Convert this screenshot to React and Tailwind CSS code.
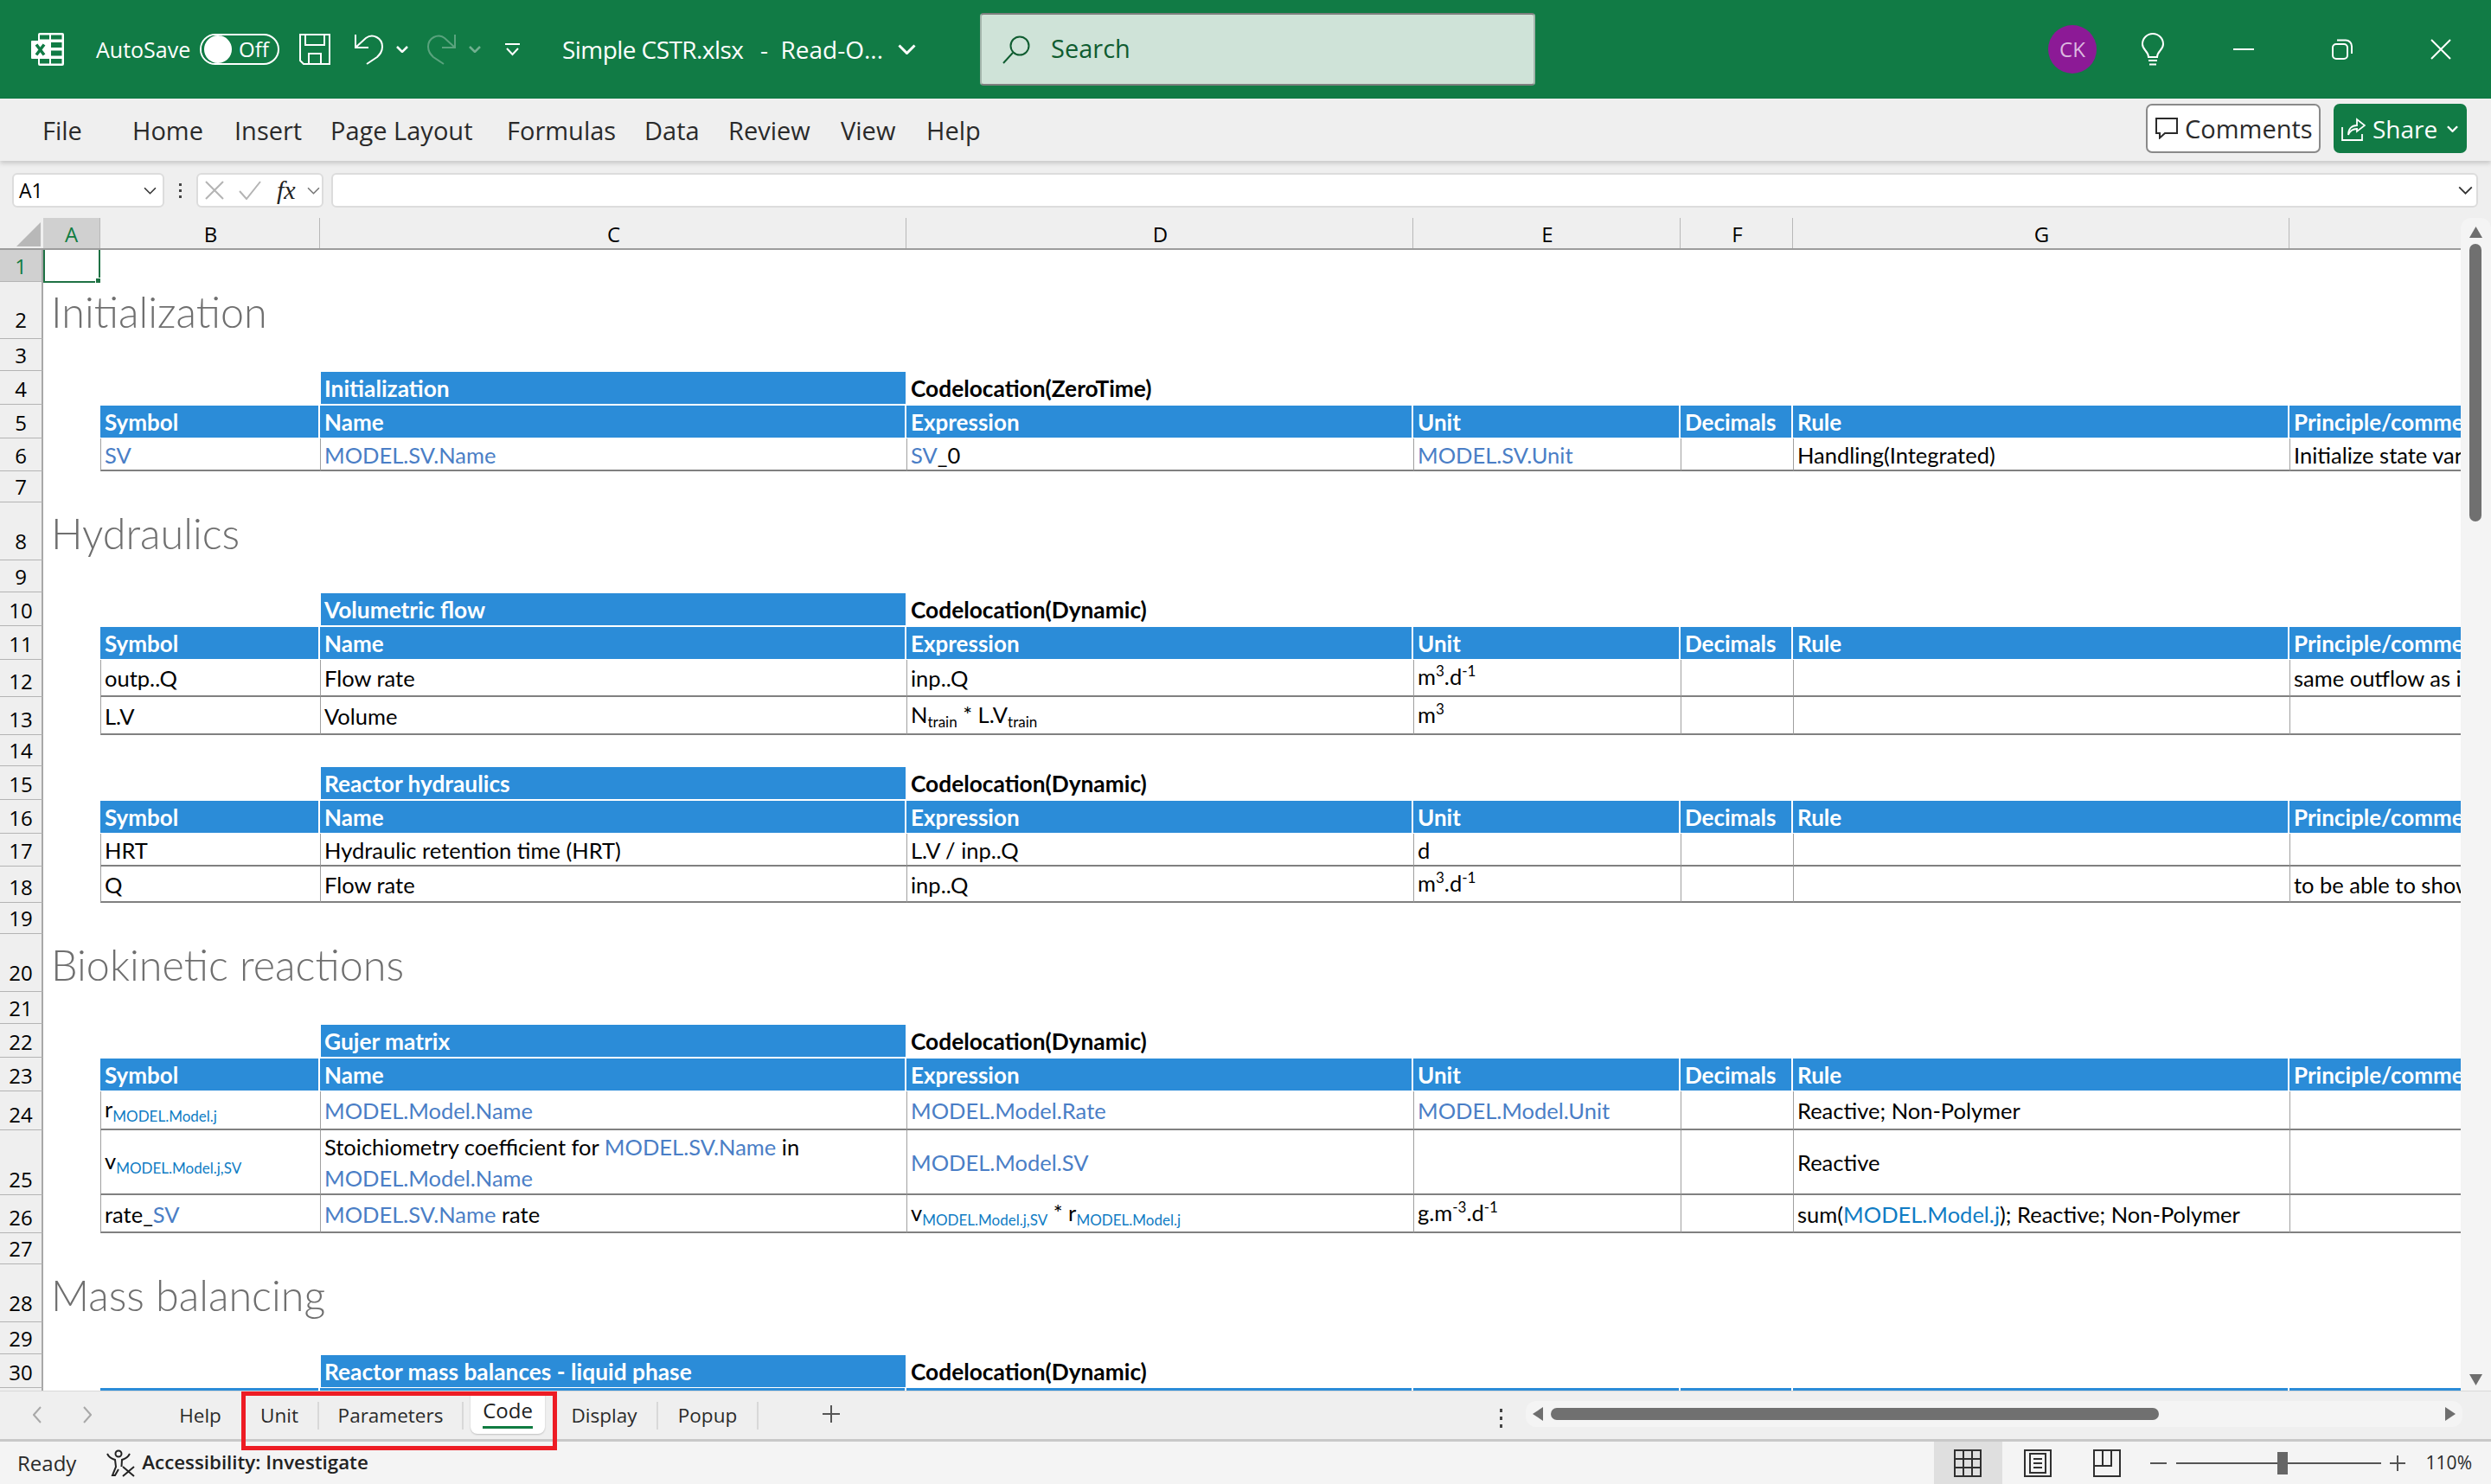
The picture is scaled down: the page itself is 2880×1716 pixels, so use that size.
import React from "react";

const Chevron = ({ className, color = "currentColor", sw = 2 }) => (
  <svg viewBox="0 0 14 8" className={className} fill="none" stroke={color} strokeWidth={sw}>
    <path d="M1 1 L7 7 L13 1" />
  </svg>
);

const ExcelLogo = () => (
  <svg viewBox="0 0 38 38" className="w-[38px] h-[38px] shrink-0">
    <rect x="8" y="0" width="30" height="38" rx="2" fill="#fff" />
    <g fill="#117b45">
      <rect x="10" y="2.5" width="11" height="5" />
      <rect x="23" y="2.5" width="12.500" height="5" />
      <rect x="23" y="11" width="12.500" height="6" />
      <rect x="23" y="20.500" width="12.500" height="6" />
      <rect x="23" y="30" width="12.500" height="5.500" />
      <rect x="10" y="30" width="11" height="5.500" />
    </g>
    <rect x="0" y="9" width="21" height="21" rx="1" fill="#fff" />
    <path d="M6 13.500 L15 25.500 M15 13.500 L6 25.500" stroke="#117b45" strokeWidth="3.500" />
  </svg>
);

const SaveIcon = () => (
  <svg viewBox="0 0 36 36" className="w-[36px] h-[36px] shrink-0" fill="none" stroke="#fff" strokeWidth="2">
    <path d="M1 1 H35 V35 H5 L1 31 Z" />
    <path d="M7 1 V13 H29 V1" />
    <path d="M11 35 V23 H25 V35" />
  </svg>
);

const UndoIcon = ({ className }) => (
  <svg viewBox="0 0 33 36" className={className} fill="none" stroke="#fff" strokeWidth="2">
    <path d="M1 1 V16 H16" />
    <path d="M1 16 L13 5 C21 -1 32 5 32 15 C32 21 29 24 26 27 L14 35" />
  </svg>
);

const SearchIcon = () => (
  <svg viewBox="0 0 32 33" className="w-[32px] h-[33px] shrink-0" fill="none" stroke="#0f5c30" strokeWidth="2">
    <circle cx="20" cy="12" r="10.500" />
    <path d="M12 20 L1 32" />
  </svg>
);

const Bulb = () => (
  <svg viewBox="0 0 26 38" className="w-[26px] h-[38px] shrink-0" fill="none" stroke="#fff" strokeWidth="2">
    <path d="M8 28 C8 21 1 20 1 13 A12 12 0 0 1 25 13 C25 20 18 21 18 28 Z" />
    <path d="M8 32 H18 M9 36.500 H17" />
  </svg>
);

const Restore = () => (
  <svg viewBox="0 0 24 24" className="w-[24px] h-[24px] shrink-0" fill="none" stroke="#fff" strokeWidth="2">
    <rect x="1" y="6" width="17" height="17" rx="4" />
    <path d="M6 1.500 H16 A7 7 0 0 1 23 8.500 V17" />
  </svg>
);

const CloseX = () => (
  <svg viewBox="0 0 24 24" className="w-[24px] h-[24px] shrink-0" fill="none" stroke="#fff" strokeWidth="2">
    <path d="M1 1 L23 23 M23 1 L1 23" />
  </svg>
);

const CommentIcon = () => (
  <svg viewBox="0 0 26 25" className="w-[26px] h-[25px] shrink-0" fill="none" stroke="#2b2b2b" strokeWidth="2">
    <path d="M1 1 H25 V18 H11 L5 23.500 V18 H1 Z" />
  </svg>
);

const ShareIcon = () => (
  <svg viewBox="0 0 28 28" className="w-[28px] h-[28px] shrink-0" fill="none" stroke="#fff" strokeWidth="1.800">
    <path d="M1 12 V27 H24 V20" />
    <path d="M8 21 C8 14 12 10 18 10 V3 L27 10 L18 17 V14 C14 14 10 16 8 21 Z" />
  </svg>
);

const AccessIcon = () => (
  <svg viewBox="0 0 35 32" className="w-[35px] h-[32px] shrink-0" fill="none" stroke="#222" strokeWidth="2">
    <circle cx="15" cy="5" r="3.500" />
    <path d="M2 5 C5 11 9 11 11 12 L12 20 L8 30 H11 L15 23 M28 5 C25 11 21 11 19 12 L18.500 20" />
    <path d="M20 20 L33 31 M33 20 L20 31" />
  </svg>
);

const GridView = () => (
  <svg viewBox="0 0 32 32" className="w-[32px] h-[32px]" fill="none" stroke="#303030" strokeWidth="2">
    <rect x="1" y="1" width="30" height="30" />
    <path d="M11 1 V31 M21 1 V31 M1 11 H31 M1 21 H31" />
  </svg>
);

const PageView = () => (
  <svg viewBox="0 0 32 32" className="w-[32px] h-[32px]" fill="none" stroke="#303030" strokeWidth="2">
    <rect x="1" y="1" width="30" height="30" />
    <rect x="7" y="5" width="18" height="22" />
    <path d="M11 11 H21 M11 16 H21 M11 21 H21" />
  </svg>
);

const BreakView = () => (
  <svg viewBox="0 0 32 32" className="w-[32px] h-[32px]" fill="none" stroke="#303030" strokeWidth="2">
    <rect x="1" y="1" width="30" height="30" />
    <path d="M1 19 H21 V1 M11 1 V19" />
  </svg>
);

const Triangle = ({ className, d, vb = "0 0 14 14", fill = "#6e6e6e" }) => (
  <svg viewBox={vb} className={className} fill={fill}>
    <path d={d} />
  </svg>
);

const L = ({ children }) => <span className="text-[#4a7ec6]">{children}</span>;
const Sub = ({ children }) => (
  <span className="relative top-[5px] text-[17px] text-[#0f7cc4]">{children}</span>
);
const SubK = ({ children }) => <span className="relative top-[5px] text-[17px]">{children}</span>;
const Sup = ({ children }) => <span className="relative -top-[10px] text-[17px]">{children}</span>;

const W = {
  a: "w-[66px]",
  b: "w-[254px]",
  c: "w-[678px]",
  d: "w-[586px]",
  e: "w-[309px]",
  f: "w-[130px]",
  g: "w-[574px]",
  h: "w-[198px]",
};
const COLS = ["b", "c", "d", "e", "f", "g", "h"];

const RowHead = ({ n, sel, tall }) => (
  <div
    className={`w-[50px] shrink-0 h-full flex items-end justify-center border-r-2 border-b border-r-[#a8a8a8] border-b-[#b4b4b4] text-[24px] leading-[35px] font-['Open_Sans',sans-serif] ${
      sel ? "bg-[#d0d0d0] text-[#107c41]" : "bg-[#efefef] text-black"
    } ${tall ? "pb-[4px]" : ""}`}
  >
    {n}
  </div>
);

const Row = ({ h, n, sel, tall, children }) => (
  <div className={`flex shrink-0 ${h}`}>
    <RowHead n={n} sel={sel} tall={tall} />
    {children}
  </div>
);

const Section = ({ h, n, children }) => (
  <Row h={h} n={n} tall>
    <div className="flex-1 pl-[9px] flex items-end pb-[4px]">
      <span className="text-[#6f6f6f] text-[48.5px] leading-[56px] font-light whitespace-nowrap">{children}</span>
    </div>
  </Row>
);

const Blank = ({ h, n }) => <Row h={h} n={n} />;

const TitleRow = ({ n, title, loc }) => (
  <Row h="h-[39px]" n={n}>
    <div className={`${W.a} shrink-0`} />
    <div className={`${W.b} shrink-0`} />
    <div className={`${W.c} shrink-0 h-full bg-[#2b8cd8] border border-white flex items-center pl-[4px] pt-[2px] text-white font-bold text-[26.300px] whitespace-nowrap`}>
      {title}
    </div>
    <div className="pl-[5px] pt-[2px] flex items-center font-bold text-black text-[26.300px] whitespace-nowrap">{loc}</div>
  </Row>
);

const HEADS = ["Symbol", "Name", "Expression", "Unit", "Decimals", "Rule", "Principle/comment"];

const HeadRow = ({ n }) => (
  <Row h="h-[39px]" n={n}>
    <div className={`${W.a} shrink-0`} />
    {COLS.map((c, i) => (
      <div
        key={c}
        className={`${W[c]} shrink-0 h-full bg-[#2b8cd8] border-y border-white ${i < 6 ? "border-r-2" : ""} flex items-center pl-[5px] pt-[2px] text-white font-bold text-[26px] whitespace-nowrap overflow-hidden`}
      >
        {HEADS[i]}
      </div>
    ))}
  </Row>
);

const DataRow = ({ h, n, cells }) => (
  <Row h={h} n={n}>
    <div className={`${W.a} shrink-0`} />
    {COLS.map((c, i) => (
      <div
        key={c}
        className={`${W[c]} shrink-0 h-full border-l border-l-[#a0a0a0] border-b-2 border-b-[#808080] flex items-center pl-[4px] pt-[1px] text-black text-[25.500px] leading-[36px] whitespace-nowrap overflow-hidden`}
      >
        {cells[i]}
      </div>
    ))}
  </Row>
);

const M3D = () => (
  <span>m<Sup>3</Sup>.d<Sup>-1</Sup></span>
);

const RIBBON = [
  ["File", "w-[104px]"],
  ["Home", "w-[118px]"],
  ["Insert", "w-[111px]"],
  ["Page Layout", "w-[204px]"],
  ["Formulas", "w-[159px]"],
  ["Data", "w-[97px]"],
  ["Review", "w-[130px]"],
  ["View", "w-[99px]"],
  ["Help", "w-[70px]"],
];

const Tab = ({ w, children }) => (
  <div className={`${w} h-[32px] mt-[12px] shrink-0 flex items-center justify-center text-[22.500px] text-[#2a2a2a]`}>{children}</div>
);
const TabSep = ({ w, children }) => (
  <div className={`${w} h-[32px] mt-[12px] shrink-0 flex items-center justify-center text-[22.500px] text-[#2a2a2a] border-r-2 border-[#d8d8d8]`}>{children}</div>
);

export default function App() {
  return (
    <div className="w-[2880px] h-[1716px] flex flex-col overflow-hidden bg-white font-['Open_Sans',sans-serif]">
      {/* Title bar */}
      <div className="h-[114px] shrink-0 bg-[#117b45] flex items-center text-white">
        <div className="ml-[36px]"><ExcelLogo /></div>
        <div className="ml-[37px] w-[120px] shrink-0 text-[25px] leading-none">AutoSave</div>
        <div className="w-[92px] h-[36px] shrink-0 rounded-full border-2 border-white flex items-center pl-[3px]">
          <div className="w-[32px] h-[32px] rounded-full bg-white shadow-[-3px_0_0_0_#117b45]" />
          <div className="ml-[8px] text-[24px] leading-none">Off</div>
        </div>
        <div className="ml-[23px]"><SaveIcon /></div>
        <div className="ml-[28px]"><UndoIcon className="w-[33px] h-[36px] shrink-0" /></div>
        <Chevron className="ml-[15px] w-[14px] h-[8px] shrink-0" color="#fff" sw="2.500" />
        <div className="ml-[22px] -scale-x-100 opacity-30"><UndoIcon className="w-[33px] h-[36px] shrink-0" /></div>
        <Chevron className="ml-[15px] w-[14px] h-[8px] shrink-0 opacity-40" color="#fff" sw="2.500" />
        <svg viewBox="0 0 17 15" className="ml-[28px] w-[17px] h-[15px] shrink-0" fill="none" stroke="#fff" strokeWidth="2">
          <path d="M0 1 H17 M2 6 L8.500 13 L15 6" />
        </svg>
        <div className="ml-[49px] w-[371px] shrink-0 text-[28px] leading-none whitespace-pre">
          <span className="tracking-[-0.56px]">Simple CSTR.xlsx</span>
          <span className="ml-[5px]">  -  Read-O...</span>
        </div>
        <Chevron className="ml-[17px] w-[21px] h-[12px] shrink-0" color="#fff" />
        <div className="ml-[74px] w-[642px] h-[84px] shrink-0 bg-[#cfe3d8] border-2 border-t-[#7f7f7f] border-b-[#7f7f7f] border-x-[#a4b5ac] rounded-[4px] flex items-center pl-[24px] text-[#0f5c30]">
          <SearchIcon />
          <span className="ml-[24px] -mt-[4px] text-[29px] leading-none">Search</span>
        </div>
        <div className="ml-[593px] w-[56px] h-[56px] shrink-0 rounded-full bg-[#8c1a96] flex items-center justify-center text-[#dcb9e0] text-[24px]">CK</div>
        <div className="ml-[52px]"><Bulb /></div>
        <div className="ml-[80px] w-[24px] h-[2px] shrink-0 bg-white" />
        <div className="ml-[90px]"><Restore /></div>
        <div className="ml-[90px]"><CloseX /></div>
      </div>

      {/* Ribbon tabs */}
      <div className="relative z-10 h-[72px] shrink-0 bg-[#efefef] flex items-center pl-[49px] shadow-[0_3px_5px_rgba(0,0,0,0.16)]">
        {RIBBON.map(([t, w]) => (
          <div key={t} className={`${w} shrink-0 text-[29px] leading-none text-[#2a2a2a] whitespace-nowrap`}>{t}</div>
        ))}
        <div className="ml-auto w-[202px] h-[57px] shrink-0 bg-white border-2 border-[#8a8a8a] rounded-[7px] flex items-center pl-[9px] mb-[3px]">
          <CommentIcon />
          <span className="ml-[8px] text-[29px] leading-none text-[#2a2a2a]">Comments</span>
        </div>
        <div className="ml-[15px] mr-[28px] w-[154px] h-[57px] shrink-0 bg-[#117b45] rounded-[7px] flex items-center pl-[9px] mb-[3px] text-white">
          <ShareIcon />
          <span className="ml-[8px] text-[28px] leading-none">Share</span>
          <Chevron className="ml-[11px] w-[13px] h-[8px]" color="#fff" sw="2.500" />
        </div>
      </div>

      {/* Formula bar */}
      <div className="h-[66px] shrink-0 bg-[#efefef] flex items-center pl-[14px] pr-[15px] pt-[2px]">
        <div className="w-[176px] h-[40px] shrink-0 bg-white border-2 border-[#dcdcdc] rounded-[6px] flex items-center pl-[6px] pr-[7px] justify-between">
          <span className="text-[23px] leading-none text-black">A1</span>
          <Chevron className="w-[15px] h-[9px]" color="#333" sw="1.500" />
        </div>
        <div className="w-[37px] shrink-0 flex flex-col items-center gap-[4px]">
          <div className="w-[3px] h-[3px] bg-[#444]" />
          <div className="w-[3px] h-[3px] bg-[#444]" />
          <div className="w-[3px] h-[3px] bg-[#444]" />
        </div>
        <div className="w-[147px] h-[40px] shrink-0 bg-white border-2 border-[#dcdcdc] rounded-[6px] flex items-center pl-[8px]">
          <svg viewBox="0 0 22 22" className="w-[22px] h-[22px] shrink-0" fill="none" stroke="#b4b4b4" strokeWidth="2">
            <path d="M1 1 L21 21 M21 1 L1 21" />
          </svg>
          <svg viewBox="0 0 26 22" className="ml-[17px] w-[26px] h-[22px] shrink-0" fill="none" stroke="#b4b4b4" strokeWidth="2">
            <path d="M1 12 L9 21 L25 1" />
          </svg>
          <span className="ml-[18px] w-[31px] font-['Liberation_Serif',serif] italic text-[30px] leading-none text-[#222]">fx</span>
          <Chevron className="ml-[4px] w-[15px] h-[9px]" color="#777" sw="1.500" />
        </div>
        <div className="ml-[9px] flex-1 h-[40px] bg-white border-2 border-[#dcdcdc] rounded-[6px] flex items-center justify-end pr-[4px]">
          <Chevron className="w-[17px] h-[10px]" color="#333" sw="1.500" />
        </div>
      </div>

      {/* Sheet */}
      <div className="flex-1 min-h-0 flex bg-[#efefef]">
        <div className="w-[2845px] shrink-0 flex flex-col overflow-hidden bg-white">
          <div className="h-[37px] shrink-0 flex bg-[#efefef] border-b-2 border-[#9c9c9c] text-[24px] leading-[37px] text-black">
            <div className="w-[50px] shrink-0 flex items-end justify-end pr-[3px] pb-[2px]">
              <svg viewBox="0 0 28 28" className="w-[28px] h-[28px]"><path d="M28 0 V28 H0 Z" fill="#b8b8b8" /></svg>
            </div>
            <div className={`${W.a} shrink-0 bg-[#d0d0d0] text-center text-[#107c41] border-r border-[#b8b8b8]`}>A</div>
            {COLS.map((c, i) => (
              <div key={c} className={`${W[c]} shrink-0 text-center pl-[2px] ${i < 6 ? "border-r border-[#b8b8b8]" : ""}`}>
                {"BCDEFG"[i]}
              </div>
            ))}
          </div>
          <div className="flex-1 min-h-0 overflow-hidden font-['Lato',sans-serif]">
            <Row h="h-[37px]" n="1" sel>
              <div className={`${W.a} shrink-0 h-[40px] -mt-[2px] relative border-[2px] border-[#1f7244]`}>
                <div className="absolute -right-[3px] -bottom-[3px] w-[7px] h-[7px] bg-[#1f7244] border border-white" />
              </div>
            </Row>
            <Section h="h-[66px]" n="2">Initialization</Section>
            <Blank h="h-[37px]" n="3" />
            <TitleRow n="4" title="Initialization" loc="Codelocation(ZeroTime)" />
            <HeadRow n="5" />
            <DataRow h="h-[38px]" n="6" cells={[<L>SV</L>, <L>MODEL.SV.Name</L>, <span><L>SV</L>_0</span>, <L>MODEL.SV.Unit</L>, "", "Handling(Integrated)", "Initialize state variables"]} />
            <Blank h="h-[36px]" n="7" />
            <Section h="h-[67px]" n="8">Hydraulics</Section>
            <Blank h="h-[37px]" n="9" />
            <TitleRow n="10" title="Volumetric flow" loc="Codelocation(Dynamic)" />
            <HeadRow n="11" />
            <DataRow h="h-[43px]" n="12" cells={["outp..Q", "Flow rate", "inp..Q", <M3D />, "", "", "same outflow as inflow"]} />
            <DataRow h="h-[44px]" n="13" cells={["L.V", "Volume", <span>N<SubK>train</SubK> * L.V<SubK>train</SubK></span>, <span>m<Sup>3</Sup></span>, "", "", ""]} />
            <Blank h="h-[36px]" n="14" />
            <TitleRow n="15" title="Reactor hydraulics" loc="Codelocation(Dynamic)" />
            <HeadRow n="16" />
            <DataRow h="h-[38px]" n="17" cells={["HRT", "Hydraulic retention time (HRT)", "L.V / inp..Q", "d", "", "", ""]} />
            <DataRow h="h-[42px]" n="18" cells={["Q", "Flow rate", "inp..Q", <M3D />, "", "", "to be able to show"]} />
            <Blank h="h-[36px]" n="19" />
            <Section h="h-[67px]" n="20">Biokinetic reactions</Section>
            <Blank h="h-[37px]" n="21" />
            <TitleRow n="22" title="Gujer matrix" loc="Codelocation(Dynamic)" />
            <HeadRow n="23" />
            <DataRow h="h-[45px]" n="24" cells={[<span>r<Sub>MODEL.Model.j</Sub></span>, <L>MODEL.Model.Name</L>, <L>MODEL.Model.Rate</L>, <L>MODEL.Model.Unit</L>, "", "Reactive; Non-Polymer", ""]} />
            <DataRow h="h-[75px]" n="25" cells={[<span>v<Sub>MODEL.Model.j,SV</Sub></span>, <span>Stoichiometry coefficient for <L>MODEL.SV.Name</L> in<br /><L>MODEL.Model.Name</L></span>, <L>MODEL.Model.SV</L>, "", "", "Reactive", ""]} />
            <DataRow h="h-[44px]" n="26" cells={[<span>rate_<L>SV</L></span>, <span><L>MODEL.SV.Name</L> rate</span>, <span>v<Sub>MODEL.Model.j,SV</Sub> * r<Sub>MODEL.Model.j</Sub></span>, <span>g.m<Sup>-3</Sup>.d<Sup>-1</Sup></span>, "", <span>sum(<span className="text-[#0f7cc4]">MODEL.Model.j</span>); Reactive; Non-Polymer</span>, ""]} />
            <Blank h="h-[36px]" n="27" />
            <Section h="h-[67px]" n="28">Mass balancing</Section>
            <Blank h="h-[37px]" n="29" />
            <TitleRow n="30" title="Reactor mass balances - liquid phase" loc="Codelocation(Dynamic)" />
            <div className="flex h-[4px]">
              <div className="w-[50px] shrink-0 bg-[#efefef] border-r-2 border-[#a8a8a8]" />
              <div className={`${W.a} shrink-0`} />
              {COLS.map((c, i) => (
                <div key={c} className={`${W[c]} shrink-0 bg-[#2b8cd8] ${i < 6 ? "border-r-2 border-white" : ""}`} />
              ))}
            </div>
          </div>
        </div>

        {/* Vertical scrollbar */}
        <div className="w-[35px] shrink-0 bg-[#f4f4f4] rounded-t-[12px] flex flex-col items-center pt-[10px] pb-[6px] pr-[1px]">
          <Triangle className="w-[15px] h-[13px]" vb="0 0 15 13" d="M7.500 0 L15 13 H0 Z" />
          <div className="mt-[7px] w-[14px] h-[321px] rounded-[7px] bg-[#707070]" />
          <Triangle className="mt-auto w-[15px] h-[13px]" vb="0 0 15 13" d="M0 0 H15 L7.500 13 Z" />
        </div>
      </div>

      {/* Sheet tabs */}
      <div className="relative z-10 h-[56px] shrink-0 bg-[#efefef] flex border-t border-[#d8d8d8]">
        <div className="w-[184px] shrink-0 flex pl-[38px] pt-[17px]">
          <svg viewBox="0 0 10 20" className="w-[10px] h-[20px]" fill="none" stroke="#a8a8a8" strokeWidth="2"><path d="M9 1 L1 10 L9 19" /></svg>
          <svg viewBox="0 0 10 20" className="ml-[48px] w-[10px] h-[20px]" fill="none" stroke="#a8a8a8" strokeWidth="2"><path d="M1 1 L9 10 L1 19" /></svg>
        </div>
        <Tab w="w-[95px]">Help</Tab>
        <TabSep w="w-[90px]">Unit</TabSep>
        <TabSep w="w-[167px]">Parameters</TabSep>
        <div className="ml-[8px] w-[86px] h-[49px] shrink-0 bg-white rounded-b-[8px] shadow-[0_1px_2px_rgba(0,0,0,0.2)] flex flex-col items-center">
          <span className="mt-[7px] text-[24px] leading-[30px] font-medium text-[#222]">Code</span>
          <div className="mt-[3px] w-[58px] h-[3px] bg-[#107c41]" />
        </div>
        <div className="ml-[8px]"><TabSep w="w-[123px]">Display</TabSep></div>
        <TabSep w="w-[116px]">Popup</TabSep>
        <div className="ml-[73px] w-[22px] h-[22px] mt-[15px] shrink-0 relative">
          <svg viewBox="0 0 22 22" className="w-[22px] h-[22px]" fill="none" stroke="#555" strokeWidth="2"><path d="M11 1 V21 M1 11 H21" /></svg>
        </div>
        <div className="ml-[762px] mt-[20px] w-[3px] flex flex-col gap-[5px] shrink-0">
          <div className="w-[3px] h-[4px] bg-[#444]" />
          <div className="w-[3px] h-[4px] bg-[#444]" />
          <div className="w-[3px] h-[4px] bg-[#444]" />
        </div>
        <div className="ml-[27px] mt-[11px] w-[1083px] h-[30px] shrink-0 bg-[#f4f4f4] rounded-[12px] flex items-center pl-[8px] pr-[8px]">
          <Triangle className="w-[12px] h-[16px]" vb="0 0 12 16" d="M12 0 V16 L0 8 Z" />
          <div className="ml-[9px] w-[703px] h-[14px] rounded-[7px] bg-[#707070]" />
          <Triangle className="ml-auto w-[12px] h-[16px]" vb="0 0 12 16" d="M0 0 V16 L12 8 Z" />
        </div>
        {/* annotation box lying over the tabs */}
        <div className="absolute left-[279px] top-0 w-[365px] h-[68px] border-[5px] border-[#ed1c24] pointer-events-none" />
      </div>

      {/* Status bar */}
      <div className="h-[52px] shrink-0 bg-[#f4f4f4] border-t-[3px] border-[#c8c8c8] flex items-center">
        <span className="ml-[20px] text-[24px] leading-none text-[#2a2a2a]">Ready</span>
        <div className="ml-[34px]"><AccessIcon /></div>
        <span className="ml-[7px] text-[22.300px] leading-none font-semibold text-[#222]">Accessibility: Investigate</span>
        <div className="ml-auto w-[79px] h-full bg-[#dfdfdf] flex items-center justify-center"><GridView /></div>
        <div className="ml-[25px]"><PageView /></div>
        <div className="ml-[48px]"><BreakView /></div>
        <div className="ml-[34px] w-[19px] h-[2px] bg-[#555]" />
        <div className="ml-[11px] w-[237px] h-[2px] bg-[#555] relative">
          <div className="absolute left-[117px] -top-[12px] w-[12px] h-[26px] bg-[#666]" />
        </div>
        <svg viewBox="0 0 18 18" className="ml-[10px] w-[18px] h-[18px]" fill="none" stroke="#555" strokeWidth="2"><path d="M9 0 V18 M0 9 H18" /></svg>
        <span className="ml-[24px] mr-[22px] text-[21px] leading-none text-[#2a2a2a]">110%</span>
      </div>
    </div>
  );
}
